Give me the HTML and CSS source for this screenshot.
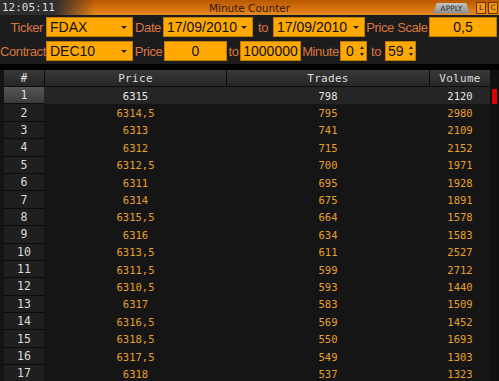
FILE: index.html
```html
<!DOCTYPE html>
<html lang="en">
<head>
<meta charset="UTF-8">
<title>Minute Counter</title>
<link rel="stylesheet" href="styles.css">
</head>
<body>

<div class="window">
  <div class="titlebar">
    <span class="clock">12:05:11</span>
    <span class="title">Minute Counter</span>
    <div class="title-actions">
      <span class="apply">APPLY</span>
      <span class="tb-btn">L</span>
      <span class="tb-btn">C</span>
    </div>
  </div>

  <div class="toolbar">
    <div class="tool-row">
      <span class="lbl right l-46">Ticker</span>
      <span class="field select f-87">FDAX<i class="caret"></i></span>
      <span class="lbl l-30">Date</span>
      <span class="field select f-90">17/09/2010<i class="caret"></i></span>
      <span class="lbl l-20">to</span>
      <span class="field select f-92">17/09/2010<i class="caret"></i></span>
      <span class="lbl l-64">Price Scale</span>
      <span class="field center f-68">0,5</span>
    </div>
    <div class="tool-row">
      <span class="lbl right l-46">Contract</span>
      <span class="field select f-87">DEC10<i class="caret"></i></span>
      <span class="lbl l-31">Price</span>
      <span class="field center f-63">0</span>
      <span class="lbl l-13">to</span>
      <span class="field center f-61">1000000</span>
      <span class="lbl l-39">Minute</span>
      <span class="field spin f-27">0<i class="spinner"></i></span>
      <span class="lbl l-18">to</span>
      <span class="field spin f-31">59<i class="spinner"></i></span>
    </div>
  </div>

  <div class="grid-area">
    <div class="grid">
      <div class="row head">
        <span class="num">#</span><span>Price</span><span>Trades</span><span>Volume</span>
      </div>
      <div class="row selected"><span class="num">1</span><span>6315</span><span>798</span><span>2120</span></div>
      <div class="row"><span class="num">2</span><span>6314,5</span><span>795</span><span>2980</span></div>
      <div class="row"><span class="num">3</span><span>6313</span><span>741</span><span>2109</span></div>
      <div class="row"><span class="num">4</span><span>6312</span><span>715</span><span>2152</span></div>
      <div class="row"><span class="num">5</span><span>6312,5</span><span>700</span><span>1971</span></div>
      <div class="row"><span class="num">6</span><span>6311</span><span>695</span><span>1928</span></div>
      <div class="row"><span class="num">7</span><span>6314</span><span>675</span><span>1891</span></div>
      <div class="row"><span class="num">8</span><span>6315,5</span><span>664</span><span>1578</span></div>
      <div class="row"><span class="num">9</span><span>6316</span><span>634</span><span>1583</span></div>
      <div class="row"><span class="num">10</span><span>6313,5</span><span>611</span><span>2527</span></div>
      <div class="row"><span class="num">11</span><span>6311,5</span><span>599</span><span>2712</span></div>
      <div class="row"><span class="num">12</span><span>6310,5</span><span>593</span><span>1440</span></div>
      <div class="row"><span class="num">13</span><span>6317</span><span>583</span><span>1509</span></div>
      <div class="row"><span class="num">14</span><span>6316,5</span><span>569</span><span>1452</span></div>
      <div class="row"><span class="num">15</span><span>6318,5</span><span>550</span><span>1693</span></div>
      <div class="row"><span class="num">16</span><span>6317,5</span><span>549</span><span>1303</span></div>
      <div class="row"><span class="num">17</span><span>6318</span><span>537</span><span>1323</span></div>
    </div>
    <div class="scroll">
      <span class="marker"></span>
    </div>
  </div>
</div>

</body>
</html>
```

FILE: styles.css
```css
html, body {
  margin: 0;
  padding: 0;
  background: #000;
}

.window {
  width: 499px;
  height: 381px;
  overflow: hidden;
  background: #000;
  font-family: "Liberation Sans", Arial, sans-serif;
}

/* title bar */
.titlebar {
  height: 15px;
  display: flex;
  align-items: center;
  position: relative;
  background:
    linear-gradient(90deg, #2e2e2e 0, #2e2e2e 54px, rgba(46, 46, 46, 0) 95px),
    linear-gradient(#b85800, #d87410 60%, #e48a22);
}

.clock {
  font-family: "DejaVu Sans Mono", monospace;
  font-size: 11px;
  color: #dcdcdc;
  padding-left: 2px;
}

.title {
  position: absolute;
  left: 0;
  right: 0;
  text-align: center;
  font-family: "DejaVu Sans", sans-serif;
  font-size: 10.5px;
  color: #301800;
}

.title-actions {
  margin-left: auto;
  display: flex;
  align-items: center;
  gap: 2px;
  padding-right: 1px;
  position: relative;
}

.apply {
  width: 37px;
  height: 11px;
  margin-right: 4px;
  margin-top: 1px;
  background: linear-gradient(#c4c4c4, #8a8a8a);
  clip-path: polygon(4px 0, 33px 0, 37px 100%, 0 100%);
  font-family: "DejaVu Sans", sans-serif;
  font-size: 7.5px;
  line-height: 12px;
  color: #333;
  text-align: center;
}

.tb-btn {
  width: 8px;
  height: 10px;
  background: #f29a10;
  border: 1px solid #6a3400;
  font-family: "DejaVu Sans", sans-serif;
  font-size: 7.5px;
  line-height: 10px;
  color: #4a2200;
  text-align: center;
}

/* parameter toolbar */
.toolbar {
  height: 49px;
  background: #1c1c1c;
  padding-top: 2px;
  box-sizing: border-box;
  display: flex;
  flex-direction: column;
  gap: 4px;
}

.tool-row {
  display: flex;
  align-items: center;
  height: 20px;
}

.lbl {
  flex: none;
  font-size: 13px;
  letter-spacing: -0.4px;
  color: #d9773c;
  text-align: center;
  white-space: nowrap;
}

.lbl.right {
  text-align: right;
  padding-right: 3px;
  box-sizing: border-box;
}

.l-13 { width: 13px; }
.l-18 { width: 18px; }
.l-20 { width: 20px; }
.l-30 { width: 30px; }
.l-31 { width: 31px; }
.l-39 { width: 39px; }
.l-46 { width: 46px; }
.l-64 { width: 64px; }

.field {
  flex: none;
  height: 20px;
  box-sizing: border-box;
  background: #ffa800;
  border: 1px solid #c27a00;
  color: #111;
  font-size: 14px;
  line-height: 18px;
  position: relative;
  padding-left: 3px;
  white-space: nowrap;
}

.field.center {
  text-align: center;
  padding-left: 0;
}

.f-27 { width: 27px; padding-left: 5px; }
.f-31 { width: 31px; padding-left: 2px; }
.f-61 { width: 61px; }
.f-63 { width: 63px; }
.f-68 { width: 68px; }
.f-87 { width: 87px; }
.f-90 { width: 90px; }
.f-92 { width: 92px; }

.caret {
  position: absolute;
  right: 5px;
  top: 8px;
  border-left: 3px solid transparent;
  border-right: 3px solid transparent;
  border-top: 3px solid #222;
}

.spinner {
  position: absolute;
  right: 4px;
  top: 4px;
  width: 0;
  height: 10px;
}

.spinner::before,
.spinner::after {
  content: "";
  position: absolute;
  left: -2px;
  border-left: 2px solid transparent;
  border-right: 2px solid transparent;
}

.spinner::before {
  top: 0;
  border-bottom: 3px solid #222;
}

.spinner::after {
  bottom: 0;
  border-top: 3px solid #222;
}

/* data grid */
.grid-area {
  margin-top: 6px;
  display: flex;
  background: #141414;
  height: 311px;
}

.grid {
  margin-left: 4px;
  width: 486px;
  font-family: "DejaVu Sans Mono", monospace;
}

.row {
  display: grid;
  grid-template-columns: 40px 181px 202px 60px;
  column-gap: 1px;
  height: 17.4px;
  font-size: 10.5px;
  color: #e8a020;
  background: #151515;
}

.row span {
  display: flex;
  align-items: center;
  justify-content: center;
}

.row .num {
  background: #1f1f1f;
  border-bottom: 1px solid #0c0c0c;
  box-sizing: border-box;
  color: #dcdcdc;
  font-size: 11.5px;
}

.row.head {
  height: 17px;
  background: #0c0c0c;
  font-size: 11px;
  color: #dedede;
  letter-spacing: 0.3px;
}

.row.head span {
  background: linear-gradient(#383838, #262626);
  border-bottom: 1px solid #0c0c0c;
}

.row.selected {
  background: #252525;
  color: #e6e6e6;
}

.row.selected .num {
  background: linear-gradient(#555, #3c3c3c);
}

.scroll {
  flex: 1;
  position: relative;
  background: #101010;
}

.marker {
  position: absolute;
  left: 2px;
  top: 19px;
  width: 5px;
  height: 15px;
  background: #e00000;
}
```
